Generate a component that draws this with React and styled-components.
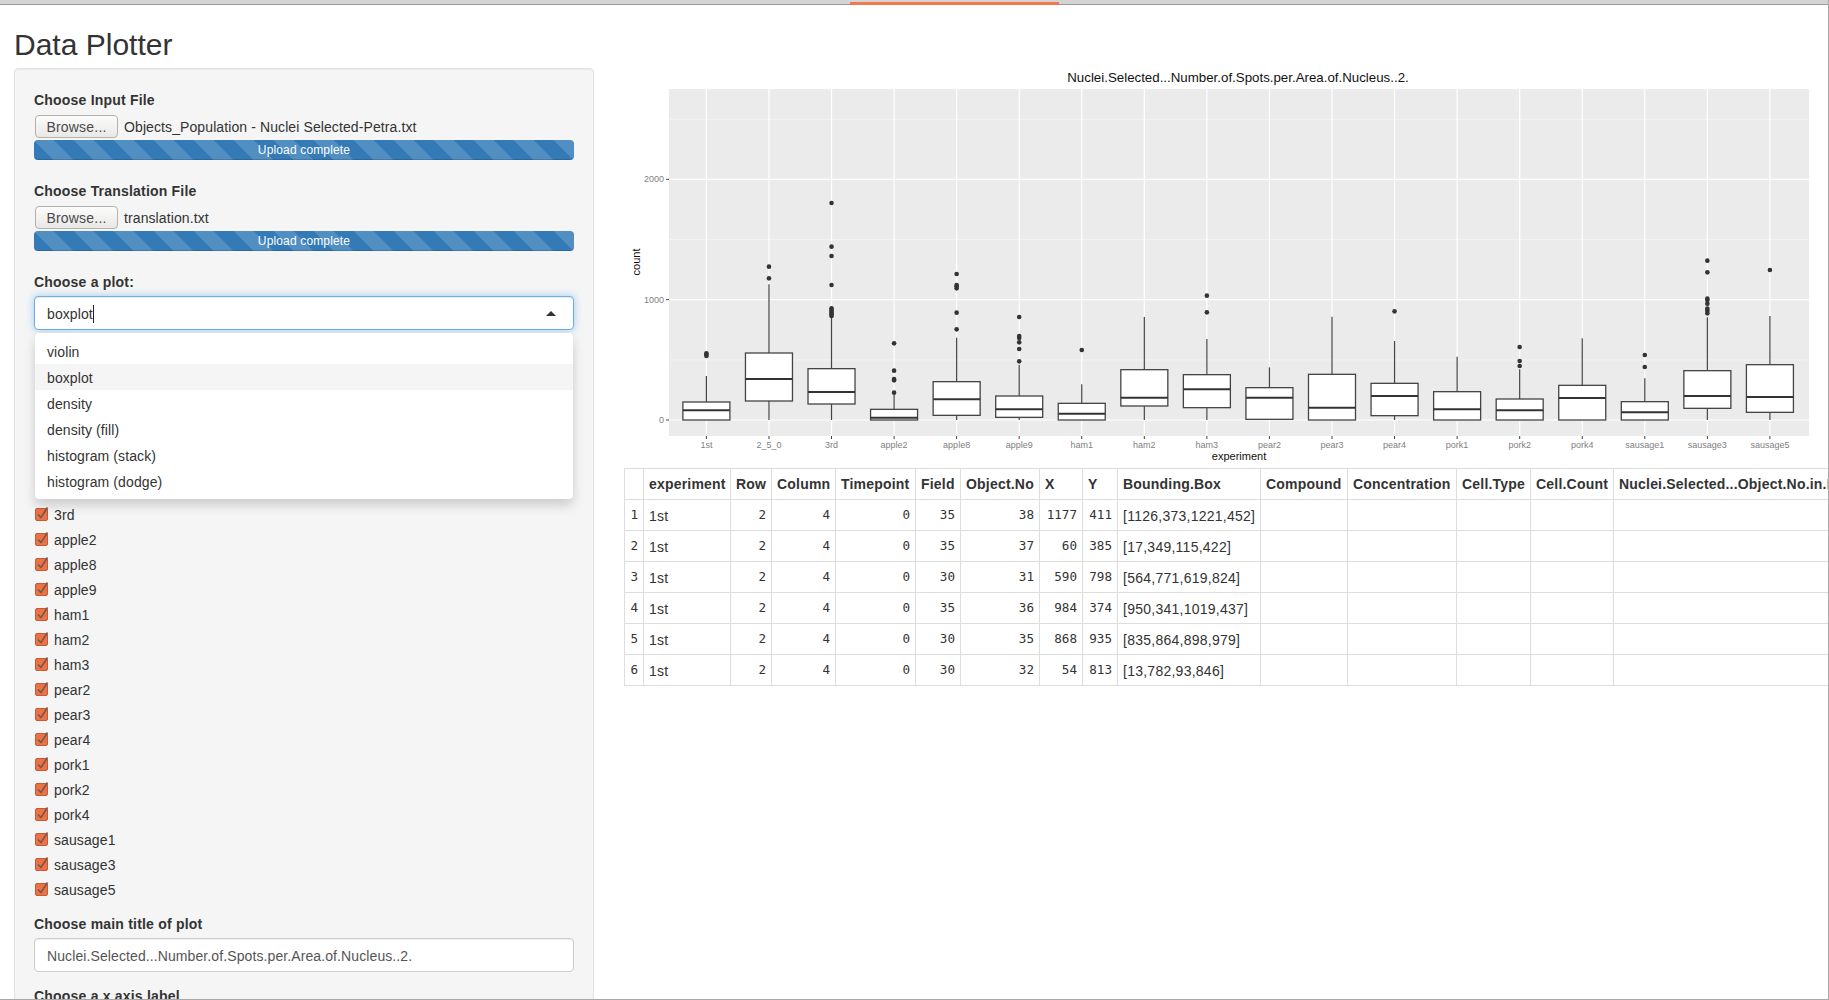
import React from 'react';
import styled, { createGlobalStyle } from 'styled-components';

const GlobalStyle = createGlobalStyle`
  html, body {
    margin: 0;
    height: 100%;
    overflow: hidden;
    background: #fff;
  }
  body {
    font-family: "Liberation Sans", Arial, sans-serif;
    font-size: 14px;
    line-height: 20px;
    letter-spacing: 0.1px;
    color: #333;
  }
`;

const Frame = styled.div`
  box-sizing: border-box;
  height: 100vh;
  overflow: hidden;
  border-right: 1px solid #a8a8a8;
  border-bottom: 1px solid #a8a8a8;
`;

const TopBar = styled.div`
  box-sizing: border-box;
  height: 5px;
  padding: 2px 0 0 850px;
  background: #d4d4d4;
  border-bottom: 1px solid #9a9a9a;
`;

const ActiveTab = styled.div`
  width: 209px;
  height: 3px;
  background: #f2784b;
`;

const Title = styled.h2`
  margin: 24px 0 8px 14px;
  font-size: 30px;
  line-height: 31px;
  font-weight: 400;
  letter-spacing: 0;
  color: #333;
`;

const Columns = styled.div`
  display: flex;
  gap: 30px;
  padding-left: 14px;
`;

const Well = styled.div`
  flex: 0 0 580px;
  box-sizing: border-box;
  padding: 21px 19px 19px;
  background: #f5f5f5;
  border: 1px solid #e3e3e3;
  border-radius: 4px;
  box-shadow: inset 0 1px 1px rgba(0, 0, 0, 0.05);
`;

const Label = styled.label`
  display: block;
  margin-bottom: ${(p) => p.$gap ?? 5}px;
  font-weight: 700;
  letter-spacing: 0.2px;
`;

const Field = styled.div`
  position: relative;
  margin-bottom: ${(p) => p.$gap ?? 21}px;
`;

const FileRow = styled.div`
  display: flex;
  align-items: center;
  gap: 6px;
  height: 23px;
  margin-bottom: 2px;
  padding-left: 1px;
`;

const BrowseButton = styled.button`
  box-sizing: border-box;
  width: 83px;
  height: 23px;
  padding: 0;
  font: inherit;
  letter-spacing: 0.2px;
  color: #4a4a4a;
  background: linear-gradient(#fcfcfc, #e9e8e6);
  border: 1px solid #b4b2ae;
  border-radius: 4px;
`;

const Progress = styled.div`
  height: 20px;
  border-radius: 4px;
  background-color: #337ab7;
  background-image: linear-gradient(
    45deg,
    rgba(255, 255, 255, 0.15) 25%,
    transparent 25%,
    transparent 50%,
    rgba(255, 255, 255, 0.15) 50%,
    rgba(255, 255, 255, 0.15) 75%,
    transparent 75%,
    transparent
  );
  background-size: 40px 40px;
  box-shadow: inset 0 -1px 0 rgba(0, 0, 0, 0.15);
  font-size: 12px;
  line-height: 20px;
  letter-spacing: 0.15px;
  text-align: center;
  color: #fff;
`;

const SelectBox = styled.div`
  box-sizing: border-box;
  display: flex;
  align-items: center;
  height: 34px;
  padding: 2px 12px 0;
  background: #fff;
  border: 1px solid #66afe9;
  border-radius: 4px;
  box-shadow: inset 0 1px 1px rgba(0, 0, 0, 0.075), 0 0 8px rgba(102, 175, 233, 0.6);
`;

const Caret = styled.span`
  width: 1px;
  height: 18px;
  background: #222;
`;

const Arrow = styled.span`
  margin: 0 5px 2px auto;
  border-left: 5px solid transparent;
  border-right: 5px solid transparent;
  border-bottom: 5px solid #333;
`;

const Dropdown = styled.div`
  position: absolute;
  z-index: 10;
  top: 61px;
  left: 1px;
  right: 1px;
  padding: 5px 0;
  background: #fff;
  border-radius: 4px;
  box-shadow: 0 6px 12px rgba(0, 0, 0, 0.175);
`;

const Option = styled.div`
  height: 26px;
  padding: 0 12px;
  line-height: 29px;
  background: ${(p) => (p.$active ? '#f5f5f5' : 'transparent')};
`;

const CheckList = styled.div`
  margin-top: ${(p) => p.$top}px;
  margin-bottom: 12px;
`;

const CheckRow = styled.div`
  display: flex;
  align-items: center;
  gap: 4px;
  height: 25px;
  padding-left: 1px;
`;

const CheckIcon = styled.svg`
  display: block;
  flex: none;
  margin-top: -2px;
`;

const TextInput = styled.div`
  box-sizing: border-box;
  height: 34px;
  padding: 7px 12px 5px;
  color: #555;
  background: #fff;
  border: 1px solid #ccc;
  border-radius: 4px;
  box-shadow: inset 0 1px 1px rgba(0, 0, 0, 0.075);
`;

const Main = styled.div`
  flex: 1;
  min-width: 0;
`;

const PlotSvg = styled.svg`
  display: block;
  width: 1188px;
  height: 400px;
  letter-spacing: 0;
`;

const DataTable = styled.table`
  border-collapse: collapse;
  table-layout: fixed;
  width: ${(p) => p.$width}px;
`;

const HeadCell = styled.th`
  box-sizing: border-box;
  height: 31px;
  padding: 0 5px;
  border: 1px solid #ddd;
  font-weight: 700;
  letter-spacing: 0.2px;
  text-align: left;
  white-space: nowrap;
  overflow: hidden;
`;

const Cell = styled.td`
  box-sizing: border-box;
  height: 31px;
  padding: ${(p) => (p.$mono ? '0 5px 1px' : '2px 5px 0')};
  border: 1px solid #ddd;
  text-align: ${(p) => (p.$mono ? 'right' : 'left')};
  white-space: nowrap;
  overflow: hidden;
  font-family: ${(p) => (p.$mono ? '"DejaVu Sans Mono", monospace' : 'inherit')};
  font-size: ${(p) => (p.$mono ? '12.6px' : '14px')};
  letter-spacing: ${(p) => (p.$mono ? '0' : '0.25px')};
`;

const ColWidth = styled.col`
  width: ${(p) => p.$w}px;
`;

// y values are px in page coords, read off the reference
const boxes = [
  ['1st', 1026, 1051, 1080, 948, 1080, [880, 884, 888]],
  ['2_5_0', 879, 957, 1023, 673, 1080, [620, 655]],
  ['3rd', 926, 996, 1032, 772, 1080, [429, 560, 588, 675, 745, 750, 755, 760, 765, 768]],
  ['apple2', 1048, 1073, 1080, 1005, 1080, [850, 932, 957, 961, 998]],
  ['apple8', 965, 1018, 1066, 833, 1080, [642, 675, 679, 685, 758, 808]],
  ['apple9', 1008, 1048, 1072, 914, 1080, [771, 828, 834, 847, 867, 904]],
  ['ham1', 1030, 1061, 1080, 973, 1080, [870]],
  ['ham2', 929, 1013, 1038, 771, 1080, []],
  ['ham3', 944, 988, 1043, 837, 1080, [707, 757]],
  ['pear2', 983, 1013, 1078, 922, 1080, []],
  ['pear3', 943, 1043, 1080, 770, 1080, []],
  ['pear4', 970, 1008, 1067, 843, 1080, [754]],
  ['pork1', 995, 1048, 1080, 890, 1080, []],
  ['pork2', 1017, 1051, 1080, 928, 1080, [861, 903, 918]],
  ['pork4', 976, 1014, 1080, 835, 1080, []],
  ['sausage1', 1025, 1057, 1080, 955, 1080, [885, 921]],
  ['sausage3', 932, 1008, 1045, 772, 1080, [602, 637, 716, 720, 731, 746, 752, 760]],
  ['sausage5', 914, 1011, 1057, 768, 1080, [630]],
];

const toY = (v) => 60 + v / 3;
const xAt = (i) => 706.4 + i * 62.56;

const Plot = () => {
  const left = 669;
  const right = 1809;
  const top = 89;
  const bottom = 436;
  return (
    <PlotSvg viewBox="624 68 1188 400">
      <text x="1238" y="82" fontSize="13.3" textAnchor="middle" fill="#111" fontFamily="Liberation Sans">
        Nuclei.Selected...Number.of.Spots.per.Area.of.Nucleus..2.
      </text>
      <rect x={left} y={top} width={right - left} height={bottom - top} fill="#ebebeb" />
      {[119.3, 239.5, 360].map((y) => (
        <line key={y} x1={left} x2={right} y1={y} y2={y} stroke="#f4f4f4" strokeWidth="0.8" />
      ))}
      {[179.3, 299.7, 420].map((y) => (
        <line key={y} x1={left} x2={right} y1={y} y2={y} stroke="#fff" strokeWidth="1.2" />
      ))}
      {boxes.map((b, i) => (
        <line key={b[0]} x1={xAt(i)} x2={xAt(i)} y1={top} y2={bottom} stroke="#fff" strokeWidth="1.2" />
      ))}
      {[['2000', 179.3], ['1000', 299.7], ['0', 420]].map(([label, y]) => (
        <g key={label}>
          <line x1={666} x2={left} y1={y} y2={y} stroke="#444" strokeWidth="1" />
          <text x="664" y={y + 3} fontSize="9" textAnchor="end" fill="#7f7f7f" fontFamily="Liberation Sans">
            {label}
          </text>
        </g>
      ))}
      {boxes.map(([name, q3, med, q1, hi, lo, outliers], i) => {
        const x = xAt(i);
        return (
          <g key={name}>
            <line x1={x} x2={x} y1={bottom} y2={bottom + 3} stroke="#444" strokeWidth="1" />
            <text x={x} y={448} fontSize="9" textAnchor="middle" fill="#7f7f7f" fontFamily="Liberation Sans">
              {name}
            </text>
            <line x1={x} x2={x} y1={toY(hi)} y2={toY(lo)} stroke="#444" strokeWidth="1.2" />
            <rect
              x={x - 23.5}
              y={toY(q3)}
              width={47}
              height={toY(q1) - toY(q3)}
              fill="#fff"
              stroke="#444"
              strokeWidth="1.3"
            />
            <line x1={x - 23.5} x2={x + 23.5} y1={toY(med)} y2={toY(med)} stroke="#333" strokeWidth="2" />
            {outliers.map((v) => (
              <circle key={v} cx={x} cy={toY(v)} r="2.3" fill="#333" />
            ))}
          </g>
        );
      })}
      <text x="1239" y="460" fontSize="11" textAnchor="middle" fill="#111" fontFamily="Liberation Sans">
        experiment
      </text>
      <text
        transform="translate(640 262) rotate(-90)"
        fontSize="11"
        textAnchor="middle"
        fill="#111"
        fontFamily="Liberation Sans"
      >
        count
      </text>
    </PlotSvg>
  );
};

const CheckedBox = () => (
  <CheckIcon width="15" height="15" viewBox="0 0 15 15">
    <rect x="0.5" y="2.5" width="12" height="12" rx="1.5" fill="#ec7246" stroke="#c25c36" />
    <path d="M3 8.5 L6 11.5 L12.5 1.5" fill="none" stroke="#75584e" strokeWidth="1.6" />
  </CheckIcon>
);

const columns = [
  ['', 19],
  ['experiment', 87],
  ['Row', 41],
  ['Column', 64],
  ['Timepoint', 80],
  ['Field', 45],
  ['Object.No', 79],
  ['X', 43],
  ['Y', 35],
  ['Bounding.Box', 143],
  ['Compound', 87],
  ['Concentration', 109],
  ['Cell.Type', 74],
  ['Cell.Count', 83],
  ['Nuclei.Selected...Object.No.in.Nuclei', 260],
];

const rows = [
  [2, 4, 0, 35, 38, 1177, 411, '[1126,373,1221,452]'],
  [2, 4, 0, 35, 37, 60, 385, '[17,349,115,422]'],
  [2, 4, 0, 30, 31, 590, 798, '[564,771,619,824]'],
  [2, 4, 0, 35, 36, 984, 374, '[950,341,1019,437]'],
  [2, 4, 0, 30, 35, 868, 935, '[835,864,898,979]'],
  [2, 4, 0, 30, 32, 54, 813, '[13,782,93,846]'],
];

const plots = ['violin', 'boxplot', 'density', 'density (fill)', 'histogram (stack)', 'histogram (dodge)'];

const FileField = ({ label, file }) => (
  <Field>
    <Label>{label}</Label>
    <FileRow>
      <BrowseButton type="button">Browse...</BrowseButton>
      <span>{file}</span>
    </FileRow>
    <Progress>Upload complete</Progress>
  </Field>
);

const App = () => (
  <Frame>
    <GlobalStyle />
    <TopBar>
      <ActiveTab />
    </TopBar>
    <Title>Data Plotter</Title>
    <Columns>
      <Well>
        <FileField label="Choose Input File" file="Objects_Population - Nuclei Selected-Petra.txt" />
        <FileField label="Choose Translation File" file="translation.txt" />
        <Field $gap={0}>
          <Label $gap={4}>Choose a plot:</Label>
          <SelectBox>
            boxplot
            <Caret />
            <Arrow />
          </SelectBox>
          <Dropdown>
            {plots.map((name) => (
              <Option key={name} $active={name === 'boxplot'}>
                {name}
              </Option>
            ))}
          </Dropdown>
        </Field>
        <CheckList $top={122}>
          {boxes.map(([name]) => (
            <CheckRow key={name}>
              <CheckedBox />
              {name}
            </CheckRow>
          ))}
        </CheckList>
        <Field $gap={14}>
          <Label $gap={4}>Choose main title of plot</Label>
          <TextInput>Nuclei.Selected...Number.of.Spots.per.Area.of.Nucleus..2.</TextInput>
        </Field>
        <Field>
          <Label>Choose a x axis label</Label>
          <TextInput>experiment</TextInput>
        </Field>
      </Well>
      <Main>
        <Plot />
        <DataTable $width={columns.reduce((sum, c) => sum + c[1], 0)}>
          <colgroup>
            {columns.map(([name, w]) => (
              <ColWidth key={name} $w={w} />
            ))}
          </colgroup>
          <thead>
            <tr>
              {columns.map(([name]) => (
                <HeadCell key={name}>{name}</HeadCell>
              ))}
            </tr>
          </thead>
          <tbody>
            {rows.map((row, i) => (
              <tr key={i}>
                <Cell $mono>{i + 1}</Cell>
                <Cell>1st</Cell>
                {row.slice(0, 7).map((v, j) => (
                  <Cell key={j} $mono>
                    {v}
                  </Cell>
                ))}
                <Cell>{row[7]}</Cell>
                <Cell />
                <Cell />
                <Cell />
                <Cell />
                <Cell />
              </tr>
            ))}
          </tbody>
        </DataTable>
      </Main>
    </Columns>
  </Frame>
);

export default App;
